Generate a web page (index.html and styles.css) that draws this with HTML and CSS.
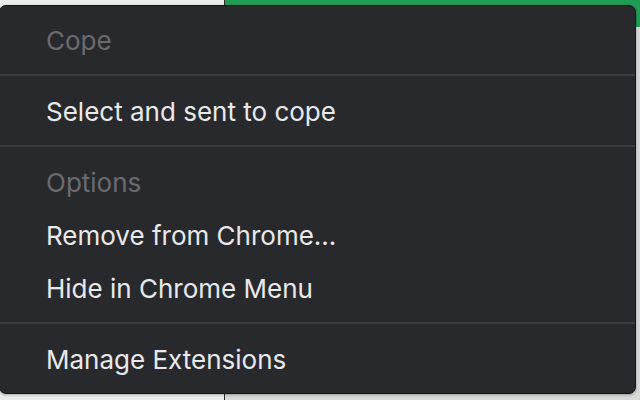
FILE: index.html
```html
<!DOCTYPE html>
<html>
<head>
<meta charset="utf-8">
<link rel="stylesheet" href="styles.css">
</head>
<body>
<div class="backdrop">
  <div class="pane-left"></div>
  <div class="pane-right">
    <div class="pane-right-header"></div>
    <div class="pane-right-body"></div>
  </div>
</div>
<div class="menu">
  <div class="item header">Cope</div>
  <div class="sep"></div>
  <div class="item">Select and sent to cope</div>
  <div class="sep"></div>
  <div class="item header">Options</div>
  <div class="item">Remove from Chrome...</div>
  <div class="item">Hide in Chrome Menu</div>
  <div class="sep"></div>
  <div class="item">Manage Extensions</div>
</div>
</body>
</html>
```
FILE: styles.css
```css
html, body {
  margin: 0;
  padding: 0;
  width: 640px;
  height: 400px;
  overflow: hidden;
  background: #dcdcdc;
}
.backdrop {
  display: flex;
  width: 640px;
  height: 400px;
}
.pane-left {
  width: 224px;
  background: #ececec;
  border-right: 1px solid #2a2a2a;
}
.pane-right {
  flex: 1;
  display: flex;
  flex-direction: column;
}
.pane-right-header {
  height: 27px;
  background: #1f9d55;
}
.pane-right-body {
  flex: 1;
  background: #d9d9d9;
}
.menu {
  position: absolute;
  left: -1px;
  top: 5px;
  width: 637px;
  height: 389px;
  box-sizing: border-box;
  background: #28292d;
  border: 1px solid #141517;
  border-radius: 7px;
  padding-top: 8px;
  font-family: "Inter", "Liberation Sans", sans-serif;
  font-size: 26px;
  color: #e9e9ea;
  box-shadow: 0 1px 3px rgba(0,0,0,0.3);
}
.item {
  height: 53px;
  line-height: 53px;
  padding-left: 46px;
  white-space: nowrap;
}
.header {
  color: #6a6b6f;
}
.sep {
  height: 2px;
  background: #3b3c40;
  margin: 7px 0 9px;
}
```
